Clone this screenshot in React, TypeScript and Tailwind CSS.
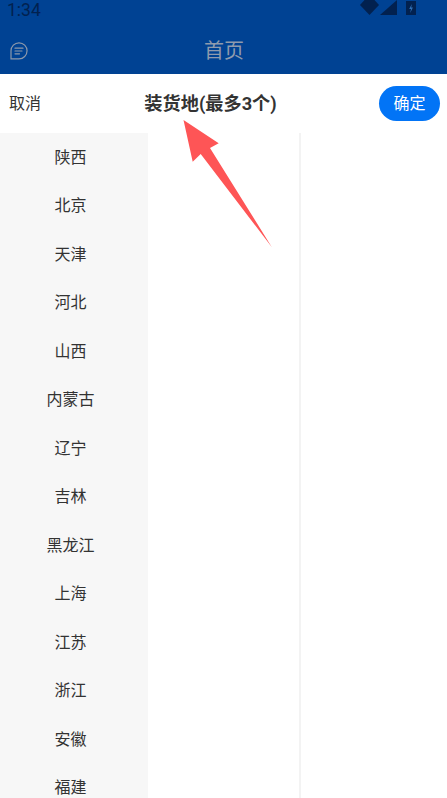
import React from "react";

const provinces = ["陕西", "北京", "天津", "河北", "山西", "内蒙古", "辽宁", "吉林", "黑龙江", "上海", "江苏", "浙江", "安徽", "福建"];

const cjk = "font-['Roboto','Noto_Sans_CJK_SC',sans-serif]";

export default function App() {
    return (
        <div className={`relative h-[798px] w-[447px] overflow-hidden bg-white ${cjk}`}>
            {/* status bar + nav */}
            <div className="h-[74px] bg-[#004293]">
                <div className="flex h-[27px] items-start justify-between overflow-hidden pl-[7px] pr-[31px]">
                    <span className="pt-[1px] text-[17.5px] leading-[18px] text-[#02214f]">1:34</span>
                    <div className="flex items-start">
                        <svg width="19" height="15" viewBox="0 0 19 15" className="text-[#02214f]">
                            <path d="M0 5 L4.5 0 H14.5 L19 5 L9.5 15 Z" fill="currentColor" />
                        </svg>
                        <svg width="17" height="15" viewBox="0 0 17 15" className="ml-[1px] text-[#02214f]">
                            <path d="M0 15 L17 0 V15 Z" fill="currentColor" />
                        </svg>
                        <svg width="10" height="15" viewBox="0 0 10 15" className="ml-[9px] text-[#02214f]">
                            <path d="M0 1 H10 V15 H0 Z" fill="currentColor" />
                            <path d="M5.8 4 L3.2 9 H5 L4.2 13 L6.9 7.6 H5.2 Z" fill="#2f6fb5" />
                        </svg>
                    </div>
                </div>
                <div className="flex h-[47px] items-center relative pl-[10px]">
                    <svg width="18" height="18" viewBox="0 0 18 18" fill="none" stroke="#8d99ab" strokeWidth="1.2" strokeLinecap="round">
                        <path d="M9 0.8 A8 8 0 0 1 9 16.9 H1 V8.8 A8 8 0 0 1 9 0.8 Z" />
                        <path d="M5 6.2 H13 M5 9 H12 M5 11.8 H9.5" />
                    </svg>
                    <span className="flex-1 pr-[27px] text-center text-[20px] leading-[28px] text-[#8f9bad]">首页</span>
                </div>
            </div>

            {/* picker actions */}
            <div className="flex h-[59px] items-center justify-between pl-[9px] pr-[7px]">
                <span className="text-[16px] text-[#333333]">取消</span>
                <span className="pt-[1px] pl-[1px] text-[18.2px] font-bold text-[#333333]">装货地(最多3个)</span>
                <button className="h-[35px] w-[61px] rounded-full bg-[#0274f6] text-[16px] text-white">确定</button>
            </div>

            {/* columns */}
            <div className="flex">
                <div className="w-[148px] shrink-0 bg-[#f7f7f7]">
                    {provinces.map((name) => (
                        <div key={name} className="flex h-[48.5px] items-center justify-center pr-[7px] pt-[1px] text-[16px] text-[#333333]">
                            {name}
                        </div>
                    ))}
                </div>
                <div className="w-[151px] shrink-0 border-r-2 border-[#f3f3f3] box-content" />
            </div>

            {/* annotation arrow */}
            <svg className="absolute left-0 top-0" width="447" height="798" viewBox="0 0 447 798">
                <path d="M183.5 120 L218.7 143.3 L210 148 L271.7 247 L200.7 154 L192.7 161.7 Z" fill="#fe5556" />
            </svg>
        </div>
    );
}
